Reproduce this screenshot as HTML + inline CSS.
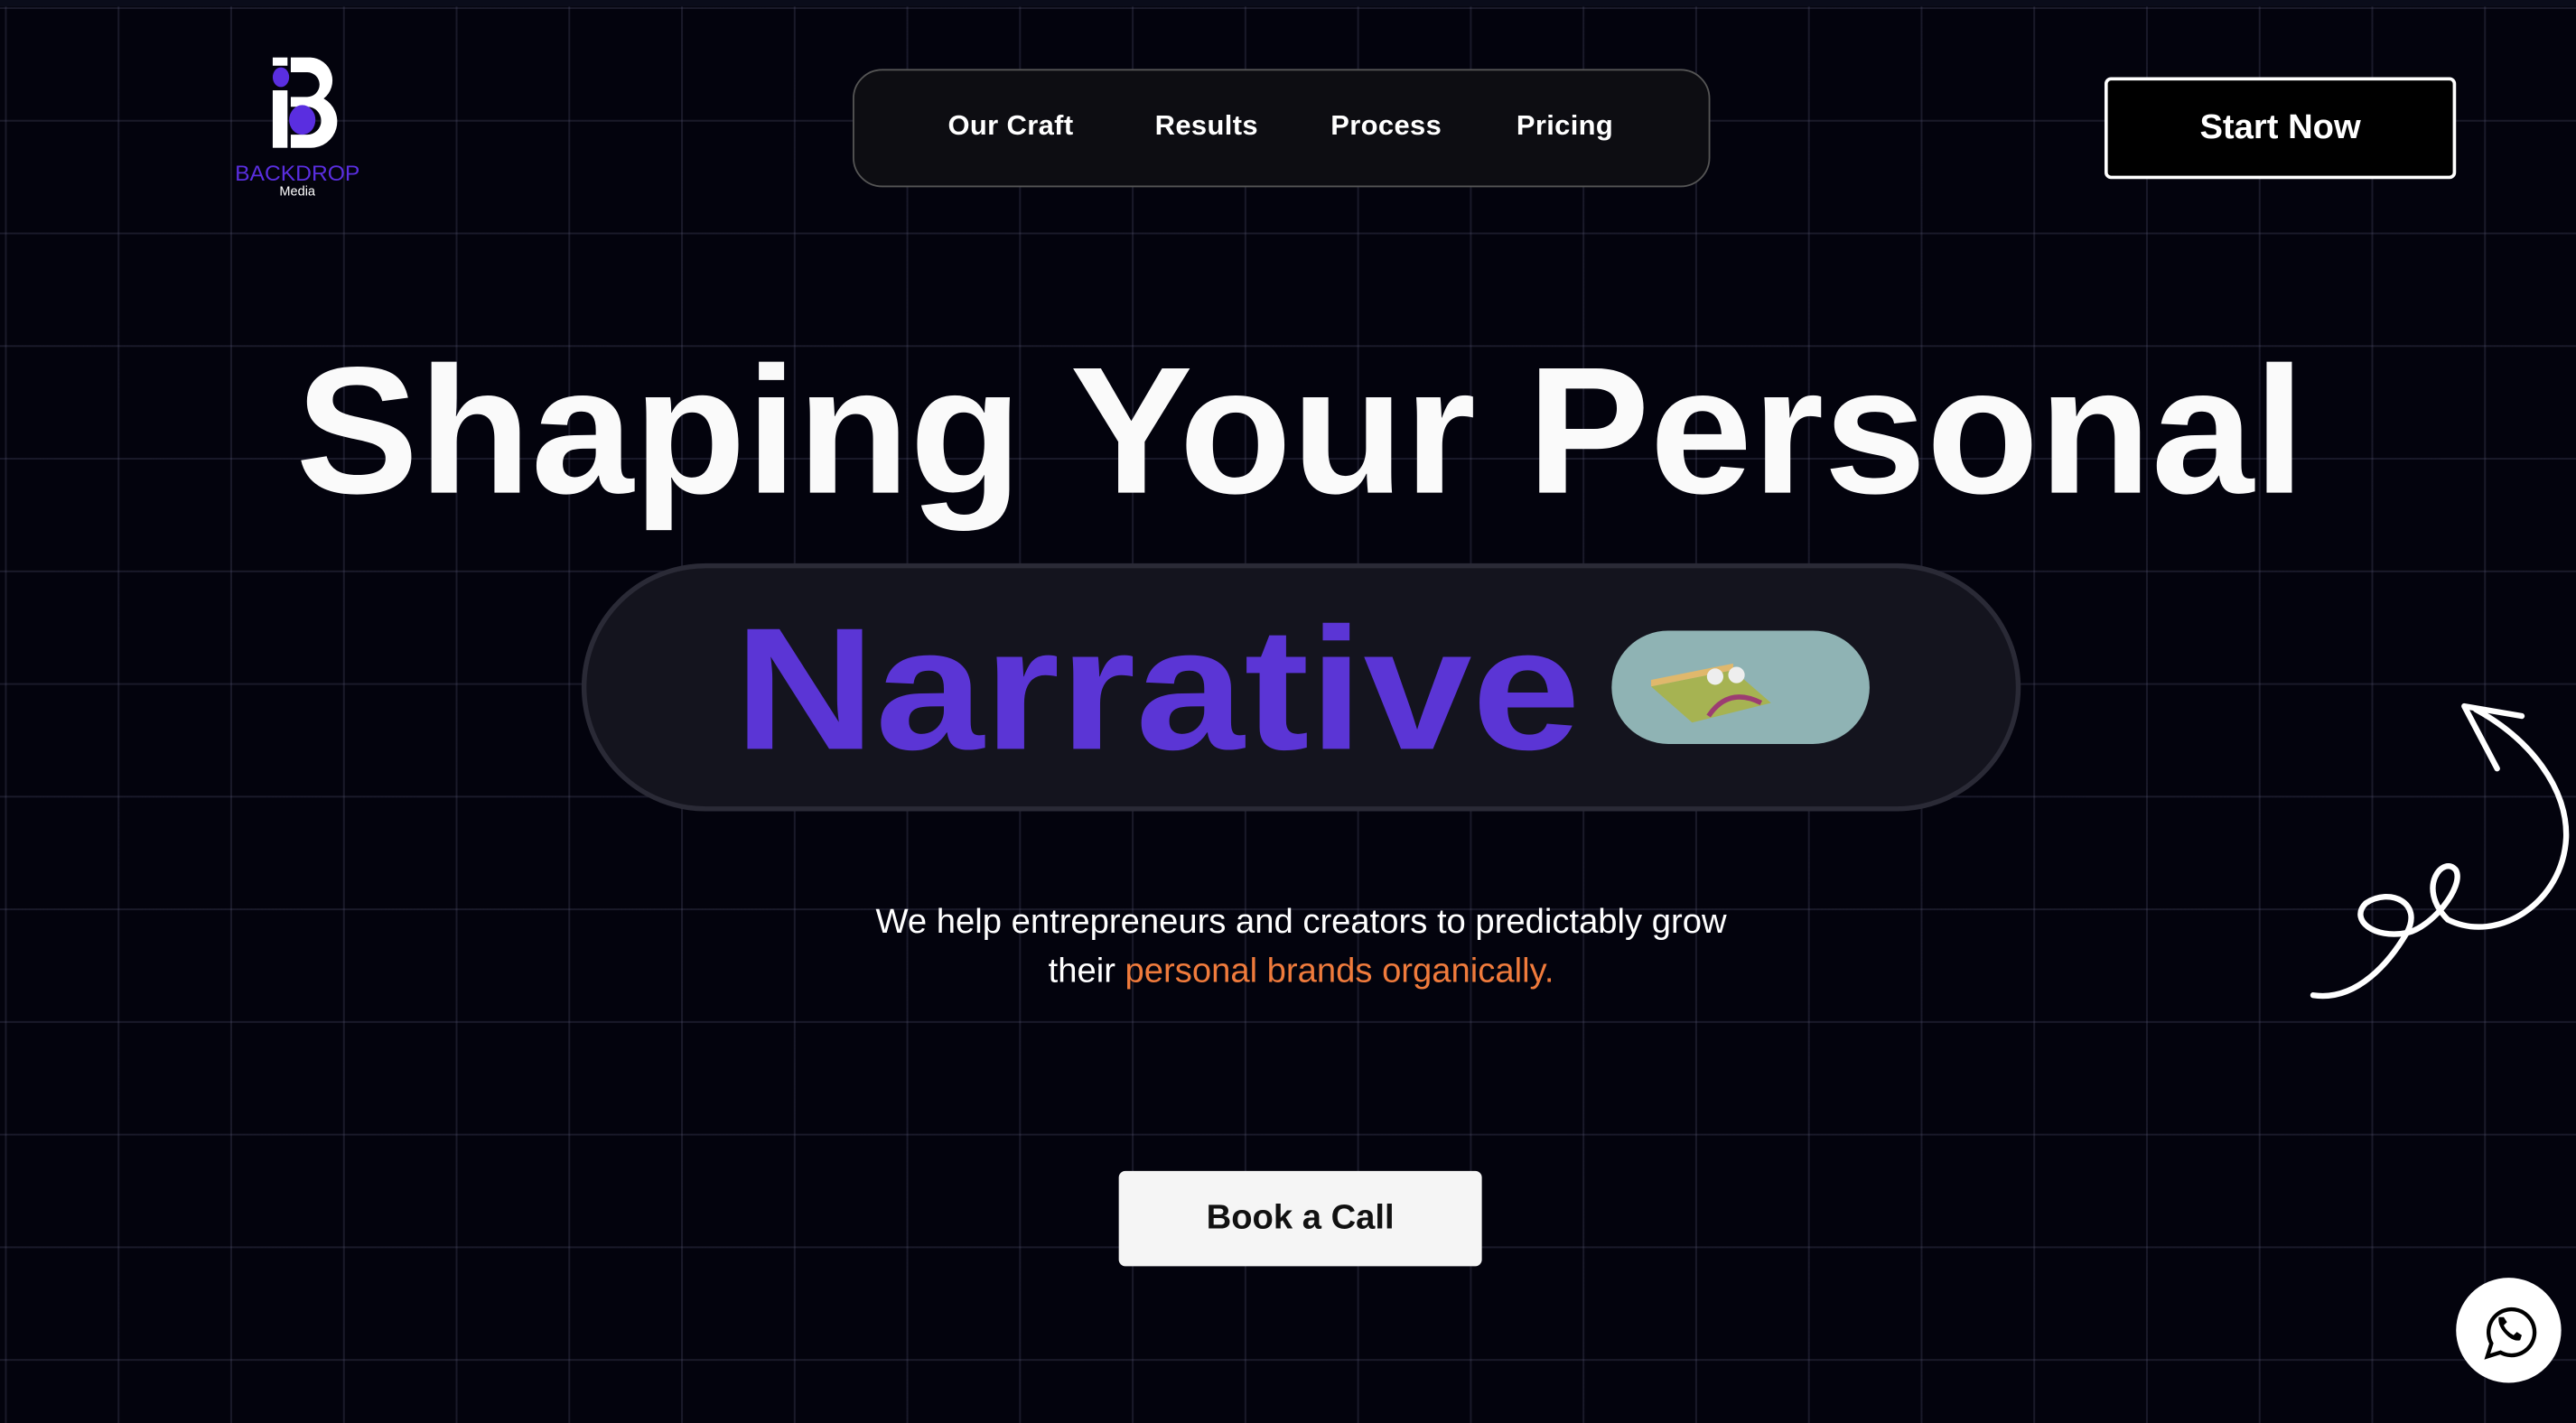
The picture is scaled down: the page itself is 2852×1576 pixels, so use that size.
<!DOCTYPE html>
<html><head><meta charset="utf-8"><style>
html,body{margin:0;padding:0;width:2852px;height:1576px;overflow:hidden;background:#03030c}
#s{position:absolute;left:0;top:0;width:1568px;height:866.5px;transform:scale(1.81888);transform-origin:0 0;
background-color:#03030d;
background-image:linear-gradient(to right,rgba(90,90,120,.26) 1px,transparent 1px),linear-gradient(to bottom,rgba(90,90,120,.26) 1px,transparent 1px);
background-size:68.6px 68.6px;background-position:3px 4.4px;font-family:"Liberation Sans",sans-serif;color:#fff;overflow:hidden}
.a{position:absolute}
.nav{left:519px;top:42px;width:520px;height:70px;border:1.5px solid #555;border-radius:18px;background:#0d0d12}
.nav span{position:absolute;top:24px;font-size:17px;font-weight:bold;letter-spacing:.2px}
.btn{left:1281px;top:47px;width:210px;height:58px;border:2px solid #fff;border-radius:4px;background:#000;font-size:21px;font-weight:bold;display:flex;align-items:center;justify-content:center}
.pill{left:354px;top:343px;width:870px;height:145px;border:3px solid #2a2a36;border-radius:76px;background:#14141e}
.sub{left:342px;width:900px;text-align:center;font-size:21px}
.book{left:681px;top:713px;width:221px;height:58px;background:#f5f5f5;border-radius:4px;color:#111;font-size:21px;font-weight:bold;display:flex;align-items:center;justify-content:center}
</style></head><body><div id="s">
<div class="a" style="left:0;top:0;width:1568px;height:4px;background:#0a0c1a"></div>
<svg class="a" style="left:140px;top:30px" width="90" height="95" viewBox="0 0 90 95">
<rect x="26" y="5" width="9" height="5" fill="#fff"/>
<rect x="26" y="25" width="9" height="35" fill="#fff"/>
<path d="M37 5 h12 a14 14 0 0 1 8 25 a16 16 0 0 1 -8 30 h-12 v-8 h10 a8 8 0 0 0 0 -17 h-10 v-6 h10 a7 7 0 0 0 0 -15 h-10z" fill="#fff"/>
<ellipse cx="31" cy="17" rx="5" ry="6" fill="#5a2ee0"/>
<ellipse cx="44" cy="43" rx="8" ry="9" fill="#5a2ee0"/>
<text x="41" y="80" text-anchor="middle" font-size="13" fill="#5a2ee0" font-family="Liberation Sans" textLength="76" lengthAdjust="spacingAndGlyphs">BACKDROP</text>
<text x="41" y="89" text-anchor="middle" font-size="8" fill="#fff" font-family="Liberation Sans">Media</text>
</svg>
<div class="a nav"><span style="left:57px">Our Craft</span><span style="left:183px">Results</span><span style="left:290px">Process</span><span style="left:403px">Pricing</span></div>
<div class="a btn">Start Now</div>
<svg class="a" style="left:0;top:0" width="1568" height="866">
<text x="180" y="300" font-family="Liberation Sans" font-weight="bold" font-size="110" fill="#fafafa" textLength="1223" lengthAdjust="spacingAndGlyphs">Shaping Your Personal</text>
</svg>
<div class="a pill"></div>
<svg class="a" style="left:0;top:0" width="1568" height="866">
<text x="447" y="456" font-family="Liberation Sans" font-weight="bold" font-size="106" fill="#5b35d5" textLength="515" lengthAdjust="spacingAndGlyphs">Narrative</text>
<rect x="981" y="384" width="157" height="69" rx="34.5" fill="#8fb3b4"/>
<path d="M1005 418 L1055 408 L1078 428 L1030 440Z" fill="#a6b352"/>
<path d="M1005 418 L1055 408 L1055 404 L1005 414Z" fill="#e0b86c"/>
<circle cx="1044" cy="412" r="5" fill="#eee"/><circle cx="1057" cy="411" r="5" fill="#eee"/>
<path d="M1040 436 Q1052 418 1072 428" stroke="#9c3d72" stroke-width="3" fill="none"/>
<g stroke="#fff" stroke-width="3.5" fill="none" stroke-linecap="round" stroke-linejoin="round">
<path d="M1408 606 C1435 610 1455 585 1465 568 C1475 550 1455 540 1440 550 C1430 560 1445 572 1465 568 C1480 565 1500 540 1495 530 C1488 520 1470 540 1490 560 C1520 575 1560 550 1562 510 C1563 480 1540 450 1507 432"/>
<path d="M1520 468 L1500 430 L1535 436"/>
</g>
<circle cx="1527" cy="810" r="32" fill="#fff"/>
<g stroke="#000" stroke-width="2.4" fill="none"><path d="M1514 826 l2.5 -8 a14 14 0 1 1 5.5 5.5 z"/></g>
<path d="M1521 802 q-1 6 6 12 q4 3 7 2 l1-3 -3-2 -2 2 q-4-2 -6-6 l2-2 -2-3z" fill="#000"/>
</svg>
<div class="a sub" style="top:550px">We help entrepreneurs and creators to predictably grow</div>
<div class="a sub" style="top:580px">their <span style="color:#f07b3c">personal brands organically.</span></div>
<div class="a book">Book a Call</div>
</div></body></html>
